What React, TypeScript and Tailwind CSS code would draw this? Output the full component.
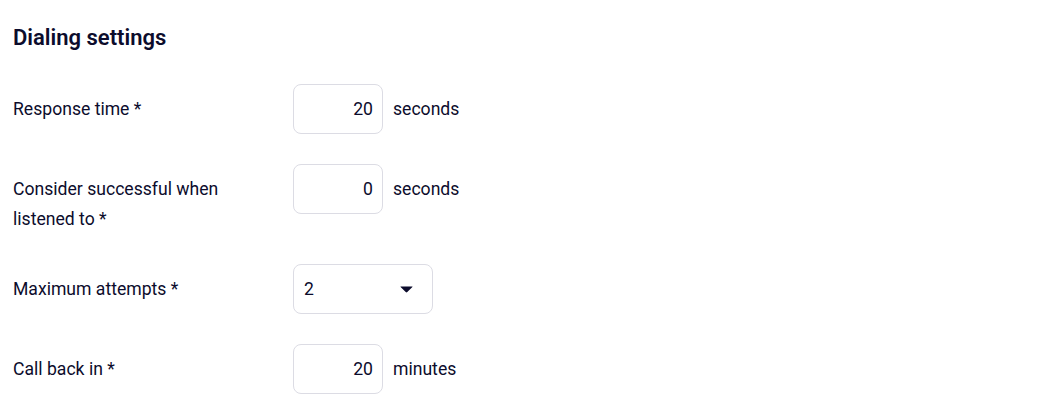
import { ReactNode } from 'react';

function Row({ label, children }: { label: string; children: ReactNode }) {
  return (
    <div className="flex items-start">
      <label className="w-[280px] shrink-0 pt-[10px] pr-[40px] text-[17.6px] leading-[30px]">{label}</label>
      <div className="flex items-center gap-[10px]">{children}</div>
    </div>
  );
}

function NumberField({ value, unit }: { value: string; unit: string }) {
  return (
    <>
      <div className="flex h-[50px] w-[90px] items-center justify-end rounded-lg border border-[#dcdce4] bg-white pr-[9px] text-[17.6px]">
        {value}
      </div>
      <span className="text-[17.6px]">{unit}</span>
    </>
  );
}

export default function App() {
  return (
    <div className="min-h-[417px] bg-white px-[13px] pt-[22px] font-['Roboto',sans-serif] text-[#0c0c2c]">
      <h2 className="text-[22px] font-semibold leading-8">Dialing settings</h2>
      <div className="mt-[30px] flex flex-col gap-[30px]">
        <Row label="Response time *">
          <NumberField value="20" unit="seconds" />
        </Row>
        <Row label="Consider successful when listened to *">
          <NumberField value="0" unit="seconds" />
        </Row>
        <Row label="Maximum attempts *">
          <div className="flex h-[50px] w-[140px] items-center justify-between rounded-lg border border-[#dcdce4] bg-white pl-[10px] pr-[19px] text-[17.6px]">
            <span>2</span>
            <svg width="13" height="7" viewBox="0 0 13 7" className="fill-[#0c0c2c]">
              <path d="M0.8 0.4 H12.2 Q12.9 0.4 12.4 1.1 L7.3 6.1 Q6.5 6.9 5.7 6.1 L0.6 1.1 Q0.1 0.4 0.8 0.4 Z" />
            </svg>
          </div>
        </Row>
        <Row label="Call back in *">
          <NumberField value="20" unit="minutes" />
        </Row>
      </div>
    </div>
  );
}
